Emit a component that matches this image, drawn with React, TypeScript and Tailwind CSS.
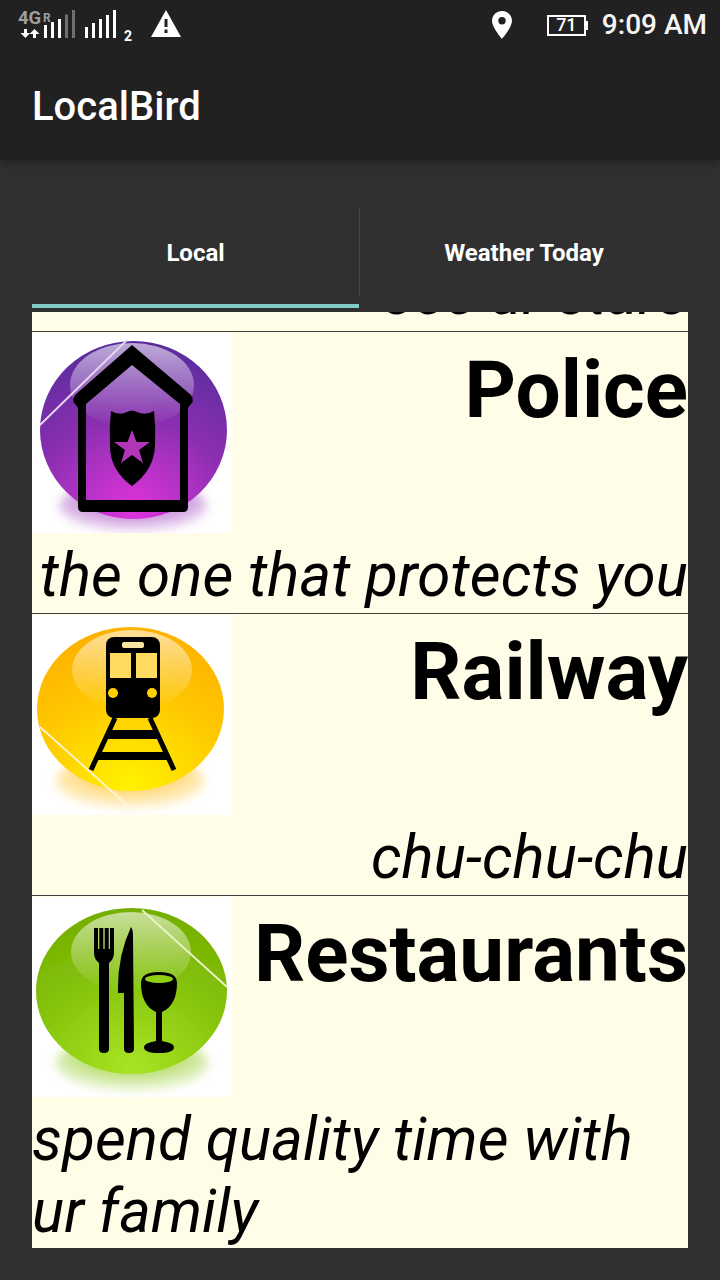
import React from "react";

const roboto = "font-['Roboto',sans-serif]";

function Glossy({ id, top, mid, bottom, glow }: { id: string; top: string; mid: string; bottom: string; glow: string }) {
  return (
    <defs>
      <radialGradient id={`${id}-ball`} cx="0.5" cy="1" r="1" fx="0.5" fy="0.95">
        <stop offset="0" stopColor={bottom} />
        <stop offset="0.55" stopColor={mid} />
        <stop offset="1" stopColor={top} />
      </radialGradient>
      <linearGradient id={`${id}-shine`} x1="0" y1="0" x2="0" y2="1">
        <stop offset="0" stopColor="#fff" stopOpacity="0.6" />
        <stop offset="1" stopColor="#fff" stopOpacity="0" />
      </linearGradient>
      <filter id={`${id}-soft`} x="-20%" y="-20%" width="140%" height="140%">
        <feGaussianBlur stdDeviation="0.7" />
      </filter>
      <filter id={`${id}-blur`} x="-30%" y="-50%" width="160%" height="200%">
        <feGaussianBlur stdDeviation="5" />
      </filter>
      <radialGradient id={`${id}-glow`} cx="0.5" cy="0.35" r="0.75">
        <stop offset="0" stopColor={glow} stopOpacity="1" />
        <stop offset="1" stopColor={glow} stopOpacity="0" />
      </radialGradient>
    </defs>
  );
}

function PoliceIcon() {
  return (
    <svg viewBox="0 0 200 200" className="w-[200px] h-[200px] shrink-0 bg-white">
      <Glossy id="p" top="#5a2c9e" mid="#8a2fb0" bottom="#e032dc" glow="#a040c0" />
      <ellipse cx="101" cy="173" rx="74" ry="26" fill="url(#p-glow)" filter="url(#p-blur)" />
      <g filter="url(#p-soft)">
        <ellipse cx="101.500" cy="97" rx="93.500" ry="89" fill="url(#p-ball)" />
        <ellipse cx="100" cy="52" rx="62" ry="42" fill="url(#p-shine)" />
        <path d="M8 92 L95 7" stroke="#e8d8f0" strokeWidth="1.8" />
        <path
          fillRule="evenodd"
          fill="#000"
          d="M100 12 L159 62 Q163 68 158 72 Q156 74 156 76 L156 174 Q156 179 151 179 L51 179 Q46 179 46 174 L46 76 Q46 74 44 72 Q39 68 43 62 Z M100 32 L54 71 L54 167 L148 167 L148 71 Z"
        />
        <path
          fill="#000"
          d="M79 78 Q88 83 95 79 Q100 76 105 79 Q113 83 122 78 Q124 95 123 113 Q122 137 100 153 Q78 137 78 113 Q77 95 79 78 Z"
        />
        <path fill="#b236ba" d="M100 97 L104.500 109 L118 109 L107 117 L111 130 L100 122 L89 130 L93 117 L82 109 L95.500 109 Z" />
      </g>
    </svg>
  );
}

function RailwayIcon() {
  return (
    <svg viewBox="0 0 200 200" className="w-[200px] h-[200px] shrink-0 bg-white">
      <Glossy id="r" top="#fdb000" mid="#ffc800" bottom="#fff200" glow="#ffc020" />
      <ellipse cx="98" cy="166" rx="74" ry="28" fill="url(#r-glow)" filter="url(#r-blur)" />
      <g filter="url(#r-soft)">
        <ellipse cx="98.500" cy="94" rx="93.500" ry="82" fill="url(#r-ball)" />
        <ellipse cx="100" cy="55" rx="60" ry="40" fill="url(#r-shine)" />
        <path d="M8 112 L95 190" stroke="#fff6d0" strokeWidth="1.8" />
        <path d="M83 103 L59 155 M118 103 L142 155" stroke="#000" strokeWidth="5" />
        <path d="M77 115 H124 L128 124 H73 Z M67 137 H134 L138 145 H63 Z" fill="#000" />
        <rect x="74" y="22" width="54" height="81" rx="8" fill="#000" />
        <rect x="90" y="27" width="22" height="6" rx="2" fill="#f6e6a0" />
        <rect x="78" y="38" width="21" height="25" fill="#ffdc60" />
        <rect x="104" y="38" width="21" height="25" fill="#ffdc60" />
        <circle cx="81" cy="78" r="5" fill="#ffd000" />
        <circle cx="120" cy="78" r="5" fill="#ffd000" />
      </g>
    </svg>
  );
}

function RestaurantIcon() {
  return (
    <svg viewBox="0 0 200 200" className="w-[200px] h-[200px] shrink-0 bg-white">
      <Glossy id="g" top="#74ae00" mid="#86c40c" bottom="#a8e424" glow="#8cc818" />
      <ellipse cx="100" cy="166" rx="76" ry="28" fill="url(#g-glow)" filter="url(#g-blur)" />
      <g filter="url(#g-soft)">
        <ellipse cx="99.500" cy="94" rx="95.500" ry="83" fill="url(#g-ball)" />
        <ellipse cx="99" cy="55" rx="60" ry="40" fill="url(#g-shine)" />
        <path d="M110 13 L195 90" stroke="#e8f5c8" strokeWidth="1.8" />
        <path
          fill="#000"
          d="M62 31 H66 V52 H67.300 V31 H71.300 V52 H72.700 V31 H76.700 V52 H78 V31 H82 V56 Q82 62 77 66 L77 152 Q77 156 72 156 Q67 156 67 152 L67 66 Q62 62 62 56 Z"
        />
        <path fill="#000" d="M99 30 Q101 32 101 40 L102 152 Q102 156 97 156 Q92 156 92 152 L92 96 L86 96 Q85 60 99 30 Z" />
        <path
          fill="#000"
          d="M109 86 Q109 75 127 75 Q145 75 145 86 Q145 108 130 115 L130 144 Q142 146 142 150 Q142 156 127 156 Q112 156 112 150 Q112 146 124 144 L124 115 Q109 108 109 86 Z"
        />
        <ellipse cx="127" cy="82" rx="14" ry="4" fill="#8fcf10" />
      </g>
    </svg>
  );
}

function StatusLeft() {
  return (
    <svg width="190" height="50" viewBox="0 0 190 50" className="shrink-0">
      <text x="18" y="24" fontFamily="Roboto, sans-serif" fontWeight="700" fontSize="18.500" fill="#9e9e9e">4G</text>
      <text x="43" y="22" fontFamily="Roboto, sans-serif" fontWeight="700" fontSize="12" fill="#9e9e9e">R</text>
      <path fill="#fff" d="M24 29 H27 V33 H30 L25.500 38 L20.500 33 H24 Z M33 38 H36 V34 H39.500 L34.500 29 L29.500 34 H33 Z" />
      <g fill="#fff">
        <rect x="44" y="25" width="3" height="13" />
        <rect x="51" y="22" width="3" height="16" />
        <rect x="58" y="19" width="3" height="19" />
        <rect x="65" y="14.500" width="3" height="23.500" fill="#6f6f6f" />
        <rect x="72" y="10" width="3" height="28" fill="#6f6f6f" />
        <rect x="85" y="27" width="3" height="11" />
        <rect x="92" y="23" width="3" height="15" />
        <rect x="99" y="19" width="3" height="19" />
        <rect x="106" y="15" width="3" height="23" />
        <rect x="113" y="10" width="3" height="28" />
      </g>
      <text x="124" y="41" fontFamily="Roboto, sans-serif" fontWeight="700" fontSize="14" fill="#fff">2</text>
      <path fillRule="evenodd" fill="#fff" d="M166 10 L181 37 H151 Z M164.500 19 V27 H167.500 V19 Z M164.500 29.500 V33 H167.500 V29.500 Z" />
    </svg>
  );
}

function PinIcon() {
  return (
    <svg width="20" height="28" viewBox="0 0 20 28" className="shrink-0">
      <path fillRule="evenodd" fill="#fff" d="M10 0 C4.500 0 0 4.300 0 9.800 C0 16.500 10 28 10 28 C10 28 20 16.500 20 9.800 C20 4.300 15.500 0 10 0 Z M10 6 A3.700 3.700 0 1 1 10 13.400 A3.700 3.700 0 1 1 10 6 Z" />
    </svg>
  );
}

function Row({ icon, title, sub, left }: { icon: React.ReactNode; title: string; sub: string; left?: boolean }) {
  return (
    <div className="border-t border-[#3f3f3f] shrink-0">
      <div className="flex h-[200px] mt-px">
        {icon}
        <div className="flex-1 text-right font-bold text-[80px] leading-[94px] text-black mt-[10px]">{title}</div>
      </div>
      <div className={`text-[60px] leading-[72px] italic text-black pt-[7px] tracking-[0.1px] ${left ? "text-left" : "text-right h-[80px]"}`}>{sub}</div>
    </div>
  );
}

export default function App() {
  return (
    <div className={`w-[720px] h-[1280px] bg-[#303030] flex flex-col overflow-hidden ${roboto}`}>
      {/* Status + action bar */}
      <div className="h-[160px] bg-[#212121] shadow-[0_2px_10px_rgba(0,0,0,0.35)] shrink-0 z-10">
        <div className="h-[50px] flex items-center">
          <StatusLeft />
          <div className="ml-auto flex items-center h-full">
            <PinIcon />
            <div className="ml-[35px] w-[42px] h-[21px] flex items-center">
              <div className="w-[39px] h-[21px] border-2 border-white flex items-center justify-center text-[18px] leading-none font-medium text-white">71</div>
              <div className="w-[2px] h-[9px] bg-white" />
            </div>
            <span className="ml-[13px] mr-[13px] text-[28px] font-medium text-[#f5f5f5] whitespace-nowrap">9:09 AM</span>
          </div>
        </div>
        <div className="h-[110px] flex items-center pl-[32px] pt-[3px] text-[40px] font-medium text-white">LocalBird</div>
      </div>

      <div className="flex-1 flex flex-col px-[32px] pt-[48px] pb-[32px] min-h-0">
        {/* Tabs */}
        <div className="flex h-[100px] shrink-0">
          <div className="w-[327px] border-b-4 border-[#80cbc4] flex items-center justify-center pb-[6px] text-[24px] font-bold text-white">Local</div>
          <div className="flex-1 flex items-center justify-center pb-[10px] border-l border-[#484848] [border-image:linear-gradient(#484848_88%,transparent_88%)_1] text-[24px] font-bold text-white">Weather Today</div>
        </div>

        {/* List, scrolled: the first row is cut off at the top */}
        <div className="mt-[4px] flex-1 min-h-0 overflow-hidden bg-[#fffde7] flex flex-col justify-end">
          <div className="shrink-0 h-[80px] pt-[7px] text-right italic text-[60px] leading-[72px] tracking-[0.1px] text-black whitespace-nowrap">see ur stars</div>
          <Row icon={<PoliceIcon />} title="Police" sub="the one that protects you" />
          <Row icon={<RailwayIcon />} title="Railway" sub="chu-chu-chu" />
          <Row icon={<RestaurantIcon />} title="Restaurants" sub="spend quality time with ur family" left />
        </div>
      </div>
    </div>
  );
}
